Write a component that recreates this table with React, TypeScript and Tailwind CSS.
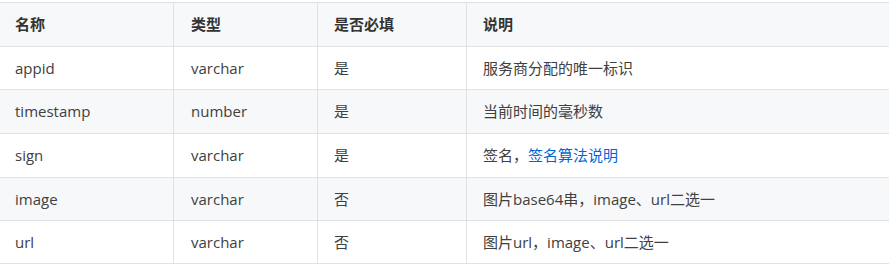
import React from 'react'

type Row = {
  name: string
  type: string
  required: string
  desc: React.ReactNode
  h: string
}

const rows: Row[] = [
  { name: 'appid', type: 'varchar', required: '是', desc: '服务商分配的唯一标识', h: 'h-[43px]' },
  { name: 'timestamp', type: 'number', required: '是', desc: '当前时间的毫秒数', h: 'h-[44px]' },
  {
    name: 'sign',
    type: 'varchar',
    required: '是',
    desc: (
      <>
        签名，<a className="text-[#0366d6]">签名算法说明</a>
      </>
    ),
    h: 'h-[44px]',
  },
  { name: 'image', type: 'varchar', required: '否', desc: '图片base64串，image、url二选一', h: 'h-[43px]' },
  { name: 'url', type: 'varchar', required: '否', desc: '图片url，image、url二选一', h: 'h-[43px]' },
]

function Cells({ cells }: { cells: React.ReactNode[] }) {
  return (
    <>
      <div className="flex w-[173px] shrink-0 items-center pl-[15px]">{cells[0]}</div>
      <div className="flex w-[144px] shrink-0 items-center border-l border-[#dfe2e5] pl-[17px]">{cells[1]}</div>
      <div className="flex w-[149px] shrink-0 items-center border-l border-[#dfe2e5] pl-[16px]">{cells[2]}</div>
      <div className="flex flex-1 items-center border-l border-[#dfe2e5] pl-[16px]">{cells[3]}</div>
    </>
  )
}

export default function App() {
  return (
    <div className="h-[266px] w-[890px] bg-white pt-[2px]">
      <div
        className="w-[889px] text-[15px] text-[#404040]"
        style={{ fontFamily: '"Open Sans", "Noto Sans CJK SC", sans-serif' }}
      >
        {/* header */}
        <div className="flex h-[45px] border-y border-[#dfe2e5] bg-[#f6f8fa] font-bold text-[#333]">
          <Cells cells={['名称', '类型', '是否必填', '说明']} />
        </div>
        {rows.map((r, i) => (
          <div
            key={r.name}
            className={`flex ${r.h} border-b border-[#dfe2e5] ${i % 2 === 1 ? 'bg-[#f6f8fa]' : 'bg-white'}`}
          >
            <Cells cells={[r.name, r.type, r.required, r.desc]} />
          </div>
        ))}
      </div>
    </div>
  )
}
